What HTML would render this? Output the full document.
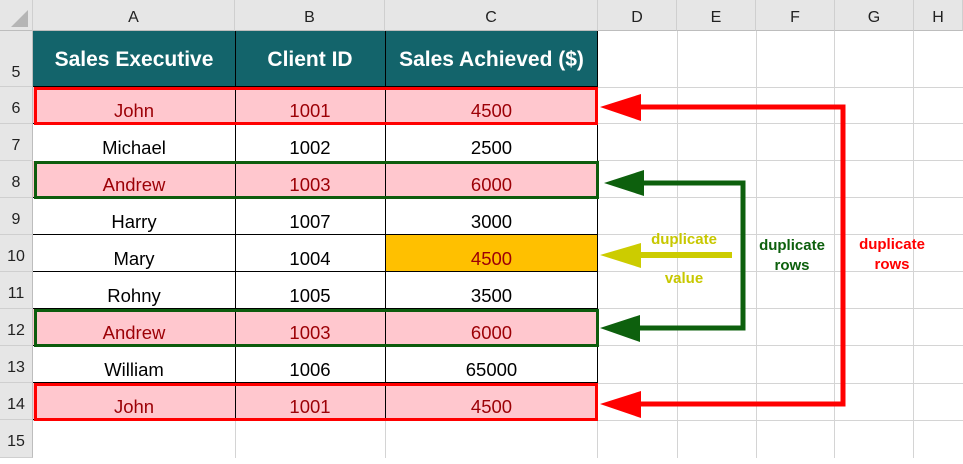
<!DOCTYPE html>
<html><head><style>
body{margin:0;width:963px;height:458px;overflow:hidden;background:#fff;font-family:"Liberation Sans",Arial,sans-serif;position:relative}
.a{position:absolute}
.ch{position:absolute;top:0;height:31px;background:#e6e6e6;border-right:1px solid #cfcfcf;border-bottom:1px solid #bdbdbd;font-size:16px;color:#222;text-align:center;line-height:36px;box-sizing:border-box}
.rh{position:absolute;left:0;width:33px;background:#e6e6e6;border-bottom:1px solid #cfcfcf;border-right:1px solid #bdbdbd;font-size:16px;color:#222;text-align:center;box-sizing:border-box}
.vl{position:absolute;top:31px;bottom:0;width:1px;background:#d4d4d4}
.hl{position:absolute;left:33px;right:0;height:1px;background:#d4d4d4}
.c{position:absolute;text-align:center;font-size:18.5px;color:#000;box-sizing:border-box}
.h{color:#fff;font-weight:bold;font-size:21px;top:48px}
.p{background:#ffc7ce;color:#9c0006}
</style></head><body>
<div class="ch" style="left:0;width:33px"><svg width="33" height="31"><polygon points="28,10 28,27 11,27" fill="#b5b5b5"/></svg></div>
<div class="ch" style="left:33px;width:202px">A</div>
<div class="ch" style="left:235px;width:150px">B</div>
<div class="ch" style="left:385px;width:213px">C</div>
<div class="ch" style="left:598px;width:79px">D</div>
<div class="ch" style="left:677px;width:79px">E</div>
<div class="ch" style="left:756px;width:79px">F</div>
<div class="ch" style="left:835px;width:79px">G</div>
<div class="ch" style="left:914px;width:49px">H</div>

<div class="rh" style="top:31px;height:56px;line-height:84px">5</div>
<div class="rh" style="top:87px;height:37px;line-height:44px">6</div>
<div class="rh" style="top:124px;height:37px;line-height:44px">7</div>
<div class="rh" style="top:161px;height:37px;line-height:44px">8</div>
<div class="rh" style="top:198px;height:37px;line-height:44px">9</div>
<div class="rh" style="top:235px;height:37px;line-height:44px">10</div>
<div class="rh" style="top:272px;height:37px;line-height:44px">11</div>
<div class="rh" style="top:309px;height:37px;line-height:44px">12</div>
<div class="rh" style="top:346px;height:37px;line-height:44px">13</div>
<div class="rh" style="top:383px;height:37px;line-height:44px">14</div>
<div class="rh" style="top:420px;height:38px;line-height:44px">15</div>

<div class="vl" style="left:677px"></div><div class="vl" style="left:756px"></div><div class="vl" style="left:834px"></div><div class="vl" style="left:913px"></div>
<div class="vl" style="left:235px;top:420px"></div><div class="vl" style="left:385px;top:420px"></div><div class="vl" style="left:597px;top:420px"></div>
<div class="hl" style="top:87px"></div><div class="hl" style="top:123px"></div><div class="hl" style="top:160px"></div><div class="hl" style="top:197px"></div><div class="hl" style="top:234px"></div><div class="hl" style="top:271px"></div><div class="hl" style="top:308px"></div><div class="hl" style="top:345px"></div><div class="hl" style="top:383px"></div><div class="hl" style="top:420px"></div>

<div class="a" style="left:33px;top:31px;width:565px;height:389px;background:#fff"></div>
<div class="a" style="left:33px;top:31px;width:565px;height:56px;background:#13646b"></div>
<div class="c h" style="left:33px;width:202px">Sales Executive</div>
<div class="c h" style="left:235px;width:150px">Client ID</div>
<div class="c h" style="left:385px;width:213px">Sales Achieved ($)</div>

<div class="a p" style="left:33px;top:87px;width:565px;height:37px"></div>
<div class="a p" style="left:33px;top:161px;width:565px;height:37px"></div>
<div class="a p" style="left:33px;top:309px;width:565px;height:37px"></div>
<div class="a p" style="left:33px;top:383px;width:565px;height:37px"></div>
<div class="a" style="left:385px;top:235px;width:213px;height:37px;background:#ffc000"></div>

<div class="a" style="left:235px;top:31px;width:1px;height:389px;background:#000"></div>
<div class="a" style="left:385px;top:31px;width:1px;height:389px;background:#000"></div>
<div class="a" style="left:597px;top:31px;width:1px;height:389px;background:#000"></div>
<div class="a" style="left:33px;top:86px;width:565px;height:1px;background:#000"></div>
<div class="a" style="left:33px;top:123px;width:565px;height:1px;background:#000"></div>
<div class="a" style="left:33px;top:197px;width:565px;height:1px;background:#000"></div>
<div class="a" style="left:33px;top:234px;width:565px;height:1px;background:#000"></div>
<div class="a" style="left:33px;top:271px;width:565px;height:1px;background:#000"></div>
<div class="a" style="left:33px;top:308px;width:565px;height:1px;background:#000"></div>
<div class="a" style="left:33px;top:345px;width:565px;height:1px;background:#000"></div>
<div class="a" style="left:33px;top:382px;width:565px;height:1px;background:#000"></div>
<div class="a" style="left:33px;top:419px;width:565px;height:1px;background:#000"></div>

<div class="a" style="left:34px;top:87px;width:564px;height:38px;border:3px solid #f00;box-sizing:border-box"></div>
<div class="a" style="left:34px;top:161px;width:565px;height:38px;border:3px solid #0d5c0d;box-sizing:border-box"></div>
<div class="a" style="left:34px;top:309px;width:565px;height:38px;border:3px solid #0d5c0d;box-sizing:border-box"></div>
<div class="a" style="left:34px;top:383px;width:564px;height:38px;border:3px solid #f00;box-sizing:border-box"></div>

<div class="c" style="left:33px;top:100px;width:202px;color:#9c0006">John</div><div class="c" style="left:235px;top:100px;width:150px;color:#9c0006">1001</div><div class="c" style="left:385px;top:100px;width:213px;color:#9c0006">4500</div>
<div class="c" style="left:33px;top:137px;width:202px">Michael</div><div class="c" style="left:235px;top:137px;width:150px">1002</div><div class="c" style="left:385px;top:137px;width:213px">2500</div>
<div class="c" style="left:33px;top:174px;width:202px;color:#9c0006">Andrew</div><div class="c" style="left:235px;top:174px;width:150px;color:#9c0006">1003</div><div class="c" style="left:385px;top:174px;width:213px;color:#9c0006">6000</div>
<div class="c" style="left:33px;top:211px;width:202px">Harry</div><div class="c" style="left:235px;top:211px;width:150px">1007</div><div class="c" style="left:385px;top:211px;width:213px">3000</div>
<div class="c" style="left:33px;top:248px;width:202px">Mary</div><div class="c" style="left:235px;top:248px;width:150px">1004</div><div class="c" style="left:385px;top:248px;width:213px;color:#9c0006">4500</div>
<div class="c" style="left:33px;top:285px;width:202px">Rohny</div><div class="c" style="left:235px;top:285px;width:150px">1005</div><div class="c" style="left:385px;top:285px;width:213px">3500</div>
<div class="c" style="left:33px;top:322px;width:202px;color:#9c0006">Andrew</div><div class="c" style="left:235px;top:322px;width:150px;color:#9c0006">1003</div><div class="c" style="left:385px;top:322px;width:213px;color:#9c0006">6000</div>
<div class="c" style="left:33px;top:359px;width:202px">William</div><div class="c" style="left:235px;top:359px;width:150px">1006</div><div class="c" style="left:385px;top:359px;width:213px">65000</div>
<div class="c" style="left:33px;top:396px;width:202px;color:#9c0006">John</div><div class="c" style="left:235px;top:396px;width:150px;color:#9c0006">1001</div><div class="c" style="left:385px;top:396px;width:213px;color:#9c0006">4500</div>

<svg class="a" style="left:0;top:0" width="963" height="458">
<g fill="none" stroke-width="5">
<polyline points="635,107 843,107 843,404 635,404" stroke="#f00"/>
<polyline points="638,183 743,183 743,328 638,328" stroke="#0d600d"/>
<line x1="638" y1="255" x2="732" y2="255" stroke="#cccc00" stroke-width="6"/>
</g>
<polygon points="600,107 641,94 641,121" fill="#f00"/>
<polygon points="600,404 641,391 641,418" fill="#f00"/>
<polygon points="604,183 644,170 644,196" fill="#0d600d"/>
<polygon points="600,328 640,315 640,342" fill="#0d600d"/>
<polygon points="600,255 641,243 641,268" fill="#cccc00"/>
<g font-family="Liberation Sans,Arial,sans-serif" font-weight="bold" font-size="15" text-anchor="middle">
<text x="684" y="244" fill="#c8c800">duplicate</text>
<text x="684" y="283" fill="#c8c800">value</text>
<text x="792" y="250" fill="#0d600d">duplicate</text>
<text x="792" y="270" fill="#0d600d">rows</text>
<text x="892" y="249" fill="#f00">duplicate</text>
<text x="892" y="269" fill="#f00">rows</text>
</g>
</svg>
</body></html>
